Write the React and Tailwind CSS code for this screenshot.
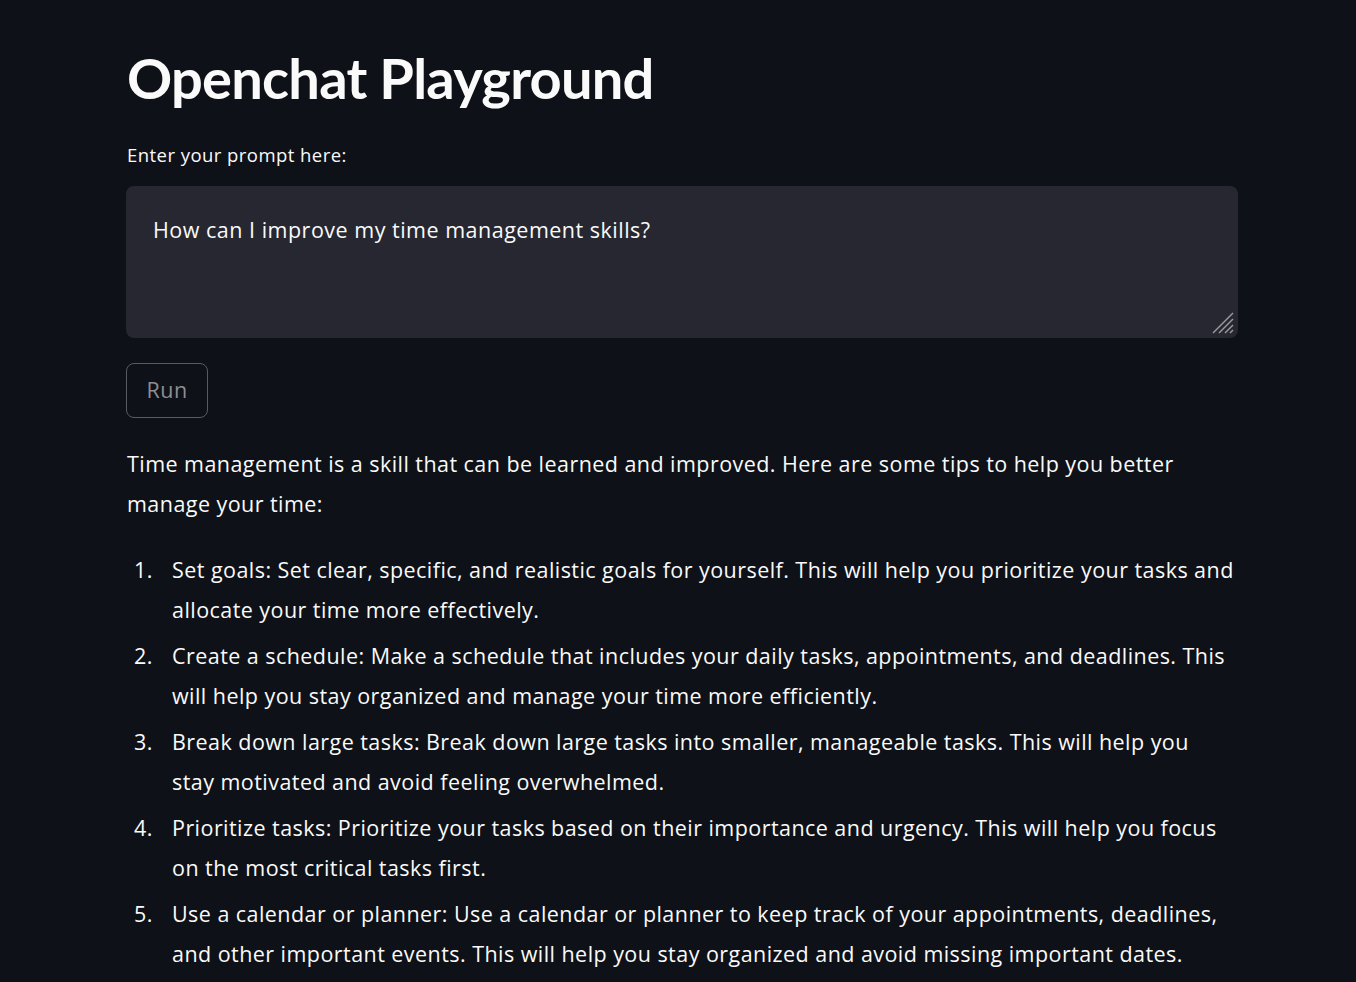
import React from "react";

const items = [
  "Set goals: Set clear, specific, and realistic goals for yourself. This will help you prioritize your tasks and allocate your time more effectively.",
  "Create a schedule: Make a schedule that includes your daily tasks, appointments, and deadlines. This will help you stay organized and manage your time more efficiently.",
  "Break down large tasks: Break down large tasks into smaller, manageable tasks. This will help you stay motivated and avoid feeling overwhelmed.",
  "Prioritize tasks: Prioritize your tasks based on their importance and urgency. This will help you focus on the most critical tasks first.",
  "Use a calendar or planner: Use a calendar or planner to keep track of your appointments, deadlines, and other important events. This will help you stay organized and avoid missing important dates.",
];

export default function App() {
  return (
    <div
      className="min-h-screen w-full bg-[#0e1117] text-[#fafafa] overflow-hidden"
      style={{ fontFamily: "'Open Sans', 'Noto Sans', sans-serif" }}
    >
      <div className="ml-[127px] w-[1112px] pt-[44px]">
        <h1
          className="text-[56px] font-bold leading-[68px] tracking-[-0.75px]"
          style={{ fontFamily: "Lato, sans-serif" }}
        >
          Openchat Playground
        </h1>
        <div className="mt-[30px] text-[18.5px] leading-[26px] tracking-[0.45px]">Enter your prompt here:</div>
        <div className="relative mt-[18px] h-[152px] w-[1112px] -ml-px rounded-[8px] bg-[#262730] px-[27px] pt-[26px] text-[21.5px] leading-[36px] tracking-[0.5px]">
          How can I improve my time management skills?
          <svg className="absolute bottom-[3px] right-[3px]" width="26" height="26" viewBox="0 0 26 26">
            <g stroke="#9a9aa0" strokeWidth="1.4">
              <line x1="24" y1="4" x2="4" y2="24" />
              <line x1="24" y1="10" x2="10" y2="24" />
              <line x1="24" y1="16" x2="16" y2="24" />
              <line x1="24" y1="21" x2="21" y2="24" />
            </g>
          </svg>
        </div>
        <button className="mt-[25px] -ml-px h-[55px] w-[82px] rounded-[8px] border border-[#5a5b61] bg-transparent text-[21.5px] tracking-[0.5px] text-[#8d8e93]">
          Run
        </button>
        <div className="text-[21.5px] leading-[40px] tracking-[0.45px]">
          <p className="mt-[26px]">
            Time management is a skill that can be learned and improved. Here are some tips to help you better manage your time:
          </p>
          <ol className="mt-[26px] w-[1108px]">
            {items.map((t, i) => (
              <li key={i} className="flex mb-[6px]">
                <span className="w-[45px] shrink-0 pl-[7px]">{i + 1}.</span>
                <span>{t}</span>
              </li>
            ))}
          </ol>
        </div>
      </div>
    </div>
  );
}
